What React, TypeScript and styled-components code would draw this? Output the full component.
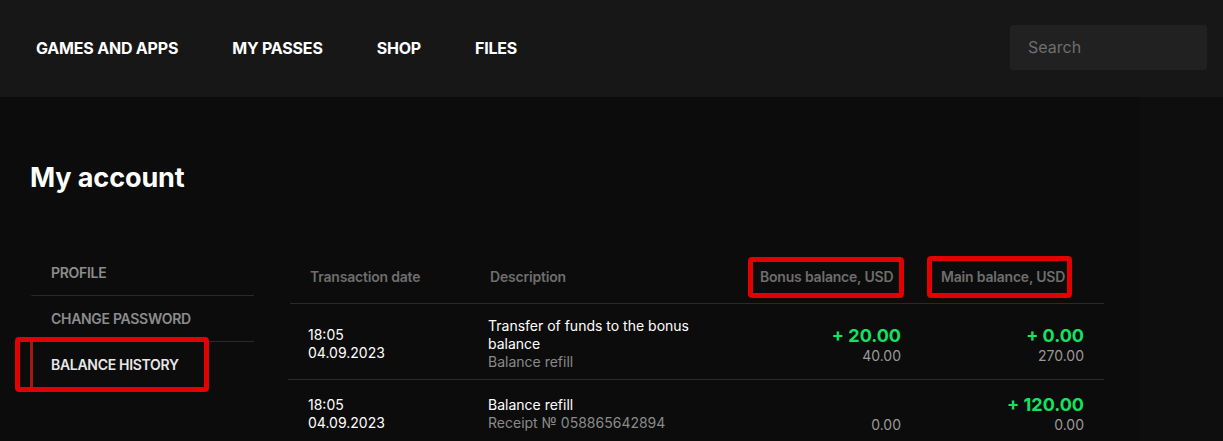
import React from "react";
import styled, { createGlobalStyle } from "styled-components";

const GlobalStyle = createGlobalStyle`
  html, body {
    margin: 0;
    padding: 0;
    background: #0e0e0e;
    font-family: Inter, "Noto Sans", Arial, sans-serif;
    color: #ffffff;
  }
  * {
    box-sizing: border-box;
  }
`;

const navItems = ["GAMES AND APPS", "MY PASSES", "SHOP", "FILES"];
const menu = ["PROFILE", "CHANGE PASSWORD", "BALANCE HISTORY"];

type Amount = { change?: string; balance: string };
type Row = {
  time: string;
  date: string;
  title: string;
  note: string;
  bonus: Amount;
  main: Amount;
};

const rows: Row[] = [
  {
    time: "18:05",
    date: "04.09.2023",
    title: "Transfer of funds to the bonus balance",
    note: "Balance refill",
    bonus: { change: "+ 20.00", balance: "40.00" },
    main: { change: "+ 0.00", balance: "270.00" },
  },
  {
    time: "18:05",
    date: "04.09.2023",
    title: "Balance refill",
    note: "Receipt № 058865642894",
    bonus: { balance: "0.00" },
    main: { change: "+ 120.00", balance: "0.00" },
  },
];

const App = () => {
  return (
    <>
      <GlobalStyle />
      <Header>
        <Nav>
          {navItems.map((item) => (
            <NavLink key={item}>{item}</NavLink>
          ))}
        </Nav>
        <Search placeholder="Search" />
      </Header>
      <Main>
        <Title>My account</Title>
        <Layout>
          <Sidebar>
            {menu.map((item, i) => (
              <MenuItem key={item} active={i === 2} last={i === menu.length - 1}>
                {item}
                {i === 2 && <Highlight style={{ left: -18, top: -5, width: 194, height: 55 }} />}
              </MenuItem>
            ))}
          </Sidebar>
          <Table>
            <HeadRow>
              <HeadCell>Transaction date</HeadCell>
              <HeadCell>Description</HeadCell>
              <HeadCell>
                Bonus balance, USD
                <Highlight style={{ left: 8, top: 7, width: 156, height: 41 }} />
              </HeadCell>
              <HeadCell>
                Main balance, USD
                <Highlight style={{ left: 6, top: 6, width: 145, height: 42 }} />
              </HeadCell>
            </HeadRow>
            {rows.map((row, i) => (
              <BodyRow key={i}>
                <Cell>
                  <Text>{row.time}</Text>
                  <Text>{row.date}</Text>
                </Cell>
                <Cell>
                  <Text>{row.title}</Text>
                  <Muted>{row.note}</Muted>
                </Cell>
                <AmountCell>
                  <Change>{row.bonus.change ?? "\u00a0"}</Change>
                  <Balance>{row.bonus.balance}</Balance>
                </AmountCell>
                <AmountCell>
                  <Change>{row.main.change ?? "\u00a0"}</Change>
                  <Balance>{row.main.balance}</Balance>
                </AmountCell>
              </BodyRow>
            ))}
          </Table>
        </Layout>
      </Main>
    </>
  );
};

export default App;

const Header = styled.header`
  height: 97px;
  background: #171717;
  display: flex;
  align-items: center;
  justify-content: space-between;
  padding: 0 16px 0 36px;
`;

const Nav = styled.nav`
  display: flex;
  gap: 54px;
  margin-top: -2px;
`;

const NavLink = styled.a`
  font-size: 16px;
  font-weight: 700;
  color: #ffffff;
  letter-spacing: -0.2px;
  cursor: pointer;
`;

const Search = styled.input`
  width: 197px;
  height: 45px;
  margin-top: -3px;
  background: #212121;
  border: none;
  border-radius: 3px;
  outline: none;
  padding: 0 18px;
  font-family: inherit;
  font-size: 16px;
  color: #ffffff;
  &::placeholder {
    color: #6e6e6e;
  }
`;

const Main = styled.main`
  width: 1140px;
  min-height: 344px;
  background: #0c0c0c;
  padding: 64px 36px 0 30px;
`;

const Title = styled.h1`
  margin: 0 0 55px;
  font-size: 27px;
  line-height: 34px;
  font-weight: 700;
  letter-spacing: -0.1px;
  color: #ffffff;
`;

const Layout = styled.div`
  display: flex;
  gap: 36px;
  align-items: flex-start;
`;

const Sidebar = styled.aside`
  width: 224px;
  display: flex;
  flex-direction: column;
`;

const MenuItem = styled.div<{ active?: boolean; last?: boolean }>`
  position: relative;
  height: ${(p) => (p.last ? "45px" : "46px")};
  display: flex;
  align-items: center;
  padding-left: 18px;
  font-size: 14px;
  font-weight: 600;
  letter-spacing: -0.3px;
  color: ${(p) => (p.active ? "#e8e8e8" : "#8c8c8c")};
  border-bottom: ${(p) => (p.last ? "none" : "1px solid #2a2a2a")};
  border-left: 3px solid ${(p) => (p.active ? "#9e1a12" : "transparent")};
`;

const Highlight = styled.span`
  position: absolute;
  border: 5px solid #e30000;
  border-radius: 4px;
  pointer-events: none;
`;

const Table = styled.div`
  width: 814px;
  display: flex;
  flex-direction: column;
`;

const columns = `180px 270px 181px 183px`;

const HeadRow = styled.div`
  display: grid;
  grid-template-columns: ${columns};
  height: 54px;
  align-items: center;
  border-bottom: 1px solid #2a2a2a;
`;

const HeadCell = styled.div`
  position: relative;
  height: 100%;
  display: flex;
  align-items: center;
  padding: 0 20px;
  font-size: 14px;
  font-weight: 600;
  letter-spacing: -0.2px;
  color: #6e6e6e;
`;

const BodyRow = styled.div`
  display: grid;
  grid-template-columns: ${columns};
  align-items: center;
  padding: 13px 0 8px;
  margin-left: -2px;
  border-bottom: 1px solid #2a2a2a;
`;

const Cell = styled.div`
  display: flex;
  flex-direction: column;
  padding: 0 20px;
  font-size: 14px;
  line-height: 18px;
`;

const Text = styled.span`
  color: #ffffff;
`;

const Muted = styled.span`
  color: #8a8a8a;
`;

const AmountCell = styled.div`
  display: flex;
  flex-direction: column;
  align-items: flex-end;
  padding: 0 18px 0 20px;
`;

const Change = styled.span`
  font-size: 18px;
  line-height: 23px;
  font-weight: 700;
  color: #16e261;
`;

const Balance = styled.span`
  font-size: 14px;
  line-height: 18px;
  color: #9a9a9a;
`;
